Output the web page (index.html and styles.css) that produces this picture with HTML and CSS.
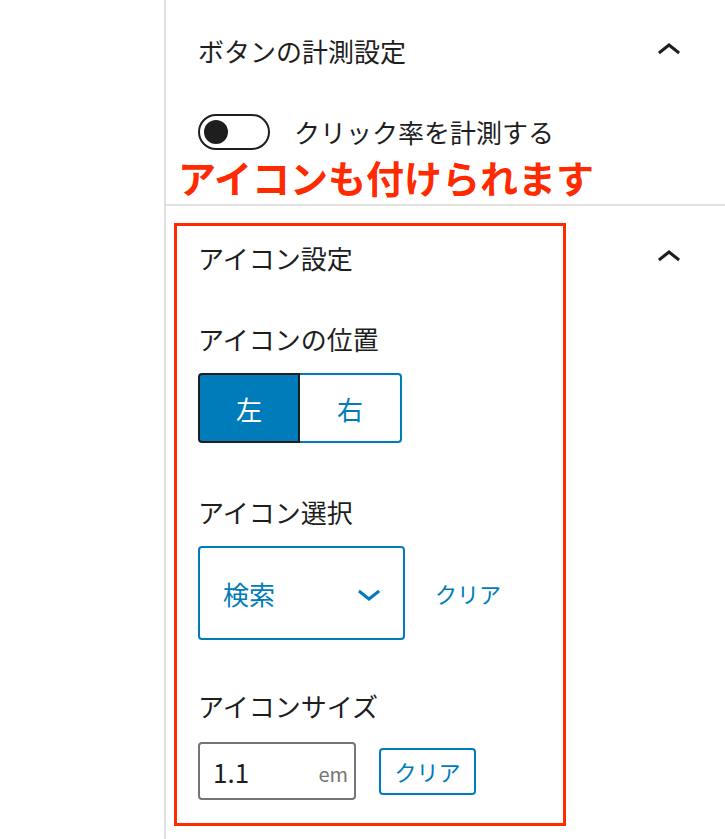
FILE: index.html
```html
<!DOCTYPE html>
<html lang="ja">
<head>
    <meta charset="UTF-8">
    <meta name="viewport" content="width=device-width, initial-scale=1.0">
    <title>アイコン設定</title>
    <link rel="stylesheet" href="styles.css">
</head>
<body>

<div class="page">
    <div class="blank"></div>

    <div class="sidebar">
        <div class="panel" id="tracking-panel">
            <div class="panel-head">
                <h2>ボタンの計測設定</h2>
                <svg class="chev" viewBox="0 0 24 24" width="48" height="48"><path d="M6.5 12.4L12 8l5.5 4.4-.9 1.2L12 10l-4.6 3.6-.9-1.2z"/></svg>
            </div>
            <div class="toggle-row">
                <span class="toggle"><span class="thumb"></span></span>
                <span>クリック率を計測する</span>
            </div>
            <p class="note">アイコンも付けられます</p>
        </div>

        <div class="panel" id="icon-panel">
            <div class="panel-head">
                <h2>アイコン設定</h2>
                <svg class="chev" viewBox="0 0 24 24" width="48" height="48"><path d="M6.5 12.4L12 8l5.5 4.4-.9 1.2L12 10l-4.6 3.6-.9-1.2z"/></svg>
            </div>

            <div class="field-label">アイコンの位置</div>
            <div class="seg">
                <button class="seg-btn active">左</button>
                <button class="seg-btn">右</button>
            </div>

            <div class="field-label gap-lg">アイコン選択</div>
            <div class="select-row">
                <div class="select">
                    <span>検索</span>
                    <svg viewBox="0 0 24 24" width="48" height="48"><path d="M17.5 11.6L12 16l-5.5-4.4.9-1.2L12 14l4.6-3.6 1 1.2z"/></svg>
                </div>
                <a class="link">クリア</a>
            </div>

            <div class="field-label gap-md">アイコンサイズ</div>
            <div class="size-row">
                <div class="unit-input">
                    <span class="val">1.1</span>
                    <span class="unit">em</span>
                </div>
                <button class="clear-btn">クリア</button>
            </div>

            <div class="highlight"></div>
        </div>
    </div>
</div>

</body>
</html>
```

FILE: styles.css
```css
body {
    margin: 0;
    padding: 0;
    background: #fff;
    font-family: "Noto Sans CJK JP", "Noto Sans", sans-serif;
    font-size: 26px;
    color: #1e1e1e;
}

.page {
    display: flex;
    height: 839px;
    overflow: hidden;
}

.blank {
    width: 164px;
    flex: none;
}

.sidebar {
    flex: 1;
    border-left: 2px solid #e0e0e0;
    position: relative;
}

.panel {
    padding: 31px 32px 5px;
}

#tracking-panel {
    border-bottom: 2px solid #e0e0e0;
}

#icon-panel {
    padding-top: 32px;
}

.panel-head {
    display: flex;
    justify-content: space-between;
    align-items: center;
    height: 40px;
}

h2 {
    margin: 0;
    font-size: 26px;
    font-weight: normal;
    line-height: 40px;
}

.chev {
    fill: #1e1e1e;
}

.toggle-row {
    display: flex;
    align-items: center;
    margin-top: 43px;
    height: 36px;
    line-height: 36px;
}

.toggle {
    width: 72px;
    height: 36px;
    box-sizing: border-box;
    border: 2px solid #1e1e1e;
    border-radius: 18px;
    margin-right: 24px;
    display: flex;
    align-items: center;
    padding-left: 4px;
}

.thumb {
    width: 24px;
    height: 24px;
    border-radius: 50%;
    background: #1e1e1e;
}

.note {
    margin: 5px 0 0 -20px;
    font-size: 38px;
    font-weight: bold;
    line-height: 44px;
    color: #ff2a00;
}

.field-label {
    margin-top: 41px;
    line-height: 40px;
}

.gap-lg { margin-top: 49px; }
.gap-md { margin-top: 46px; }

.seg {
    display: flex;
    margin-top: 14px;
}

.seg-btn {
    width: 102px;
    height: 70px;
    font-family: inherit;
    font-size: 26px;
    background: #fff;
    color: #007cba;
    border: 2px solid #007cba;
    border-left: none;
    border-radius: 0 4px 4px 0;
    padding: 0;
}

.seg-btn.active {
    background: #007cba;
    color: #fff;
    border: 2px solid #1e1e1e;
    border-radius: 4px 0 0 4px;
}

.select-row {
    display: flex;
    align-items: center;
    margin-top: 14px;
}

.select {
    width: 207px;
    height: 94px;
    box-sizing: border-box;
    border: 2px solid #007cba;
    border-radius: 4px;
    display: flex;
    align-items: center;
    justify-content: space-between;
    padding: 0 10px 0 23px;
    color: #007cba;
}

.select svg {
    fill: #007cba;
}

.link {
    margin-left: 30px;
    font-size: 22px;
    color: #007cba;
}

.size-row {
    display: flex;
    align-items: center;
    margin-top: 16px;
}

.unit-input {
    width: 158px;
    height: 58px;
    box-sizing: border-box;
    border: 2px solid #757575;
    border-radius: 4px;
    display: flex;
    align-items: center;
    justify-content: space-between;
    padding: 0 6px 0 13px;
}

.unit {
    font-size: 20px;
    color: #757575;
    padding-top: 4px;
}

.clear-btn {
    margin-left: 23px;
    width: 97px;
    height: 47px;
    font-family: inherit;
    font-size: 22px;
    color: #007cba;
    background: #fff;
    border: 2px solid #007cba;
    border-radius: 4px;
    padding: 0;
}

/* annotation frame drawn over the panel */
.highlight {
    position: absolute;
    left: 8px;
    top: 223px;
    width: 392px;
    height: 603px;
    box-sizing: border-box;
    border: 3px solid #ff2a00;
    pointer-events: none;
}
```
